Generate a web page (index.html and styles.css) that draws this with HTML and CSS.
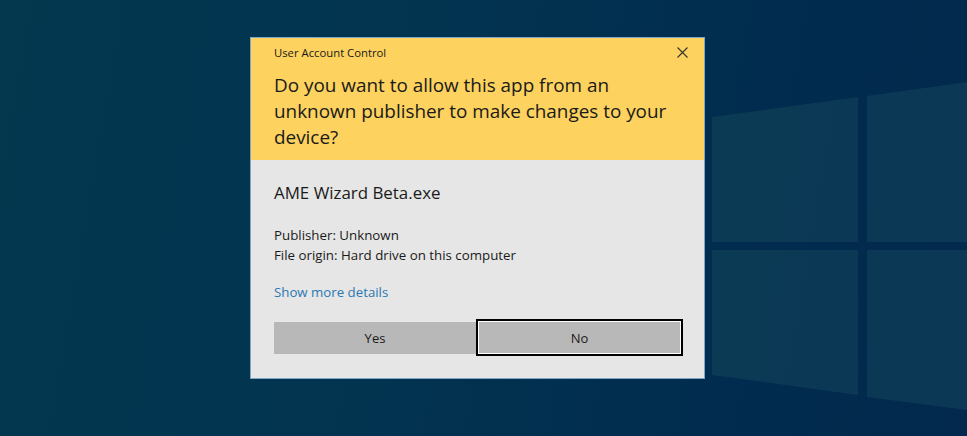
FILE: index.html
```html
<!DOCTYPE html>
<html lang="en">
<head>
    <meta charset="UTF-8">
    <meta name="viewport" content="width=device-width, initial-scale=1.0">
    <title>User Account Control</title>
    <link rel="stylesheet" href="styles.css">
</head>
<body>
    <div class="desktop">
        <svg class="logo" width="967" height="436" viewBox="0 0 967 436">
            <polygon class="pane" points="712,117 858,97 858,242 712,242"/>
            <polygon class="pane" points="867,96 967,82 967,242 867,242"/>
            <polygon class="pane" points="712,250 858,250 858,395 712,375"/>
            <polygon class="pane" points="867,250 967,250 967,410 867,397"/>
        </svg>

        <div class="dialog">
            <div class="header">
                <div class="titlebar">
                    <span class="caption">User Account Control</span>
                    <svg class="close" width="11" height="11" viewBox="0 0 11 11">
                        <path d="M0.5 0.5 L10.5 10.5 M10.5 0.5 L0.5 10.5"/>
                    </svg>
                </div>
                <h1 class="question">Do you want to allow this app from an unknown publisher to make changes to your device?</h1>
            </div>
            <div class="content">
                <div class="app-name">AME Wizard Beta.exe</div>
                <div class="info">
                    <p>Publisher: Unknown</p>
                    <p>File origin: Hard drive on this computer</p>
                </div>
                <a class="details" href="#">Show more details</a>
                <div class="buttons">
                    <button class="btn btn-yes">Yes</button>
                    <button class="btn btn-no">No</button>
                </div>
            </div>
        </div>
    </div>
</body>
</html>
```

FILE: styles.css
```css
body {
    margin: 0;
    font-family: 'Open Sans', 'Noto Sans', sans-serif;
}
.desktop {
    position: relative;
    width: 967px;
    height: 436px;
    overflow: hidden;
    background: linear-gradient(100deg, #03384f 0%, #023450 40%, #012c4f 75%, #02294d 100%);
    padding: 37px 0 0 250px;
    box-sizing: border-box;
}
.logo {
    position: absolute;
    left: 0;
    top: 0;
}
.pane {
    fill: #0f4058;
    opacity: 0.7;
}
.dialog {
    position: relative;
    width: 455px;
    border: 1px solid #7fa6c6;
    box-sizing: border-box;
}
.header {
    background: #fdd25e;
    padding: 6px 14px 10px 23px;
    color: #1a1a1a;
}
.titlebar {
    display: flex;
    justify-content: space-between;
    align-items: center;
    height: 17px;
}
.caption {
    font-size: 11.3px;
}
.close {
    margin-right: 2px;
}
.close path {
    stroke: #333;
    stroke-width: 1.1;
    fill: none;
}
.question {
    margin: 11px 0 0 0;
    font-size: 18.9px;
    font-weight: normal;
    line-height: 26px;
    padding-right: 15px;
}
.content {
    background: #e6e6e6;
    padding: 22px 20px 22px 23px;
    color: #1a1a1a;
}
.app-name {
    font-size: 16.9px;
    line-height: 22px;
}
.info {
    margin-top: 22px;
    font-size: 13.3px;
    line-height: 19.5px;
}
.info p {
    margin: 0;
}
.details {
    display: block;
    margin-top: 18px;
    font-size: 13.25px;
    line-height: 18px;
    color: #2b78b4;
    text-decoration: none;
}
.buttons {
    display: flex;
    align-items: center;
    margin-top: 18px;
}
.btn {
    font-family: inherit;
    font-size: 13px;
    color: #1a1a1a;
    background: #b8b8b8;
    border: none;
    padding: 0;
}
.btn-yes {
    width: 202px;
    height: 32px;
}
.btn-no {
    width: 207px;
    height: 37px;
    border: 2px solid #000;
    box-shadow: inset 0 0 0 1px #ffffff;
}
```
